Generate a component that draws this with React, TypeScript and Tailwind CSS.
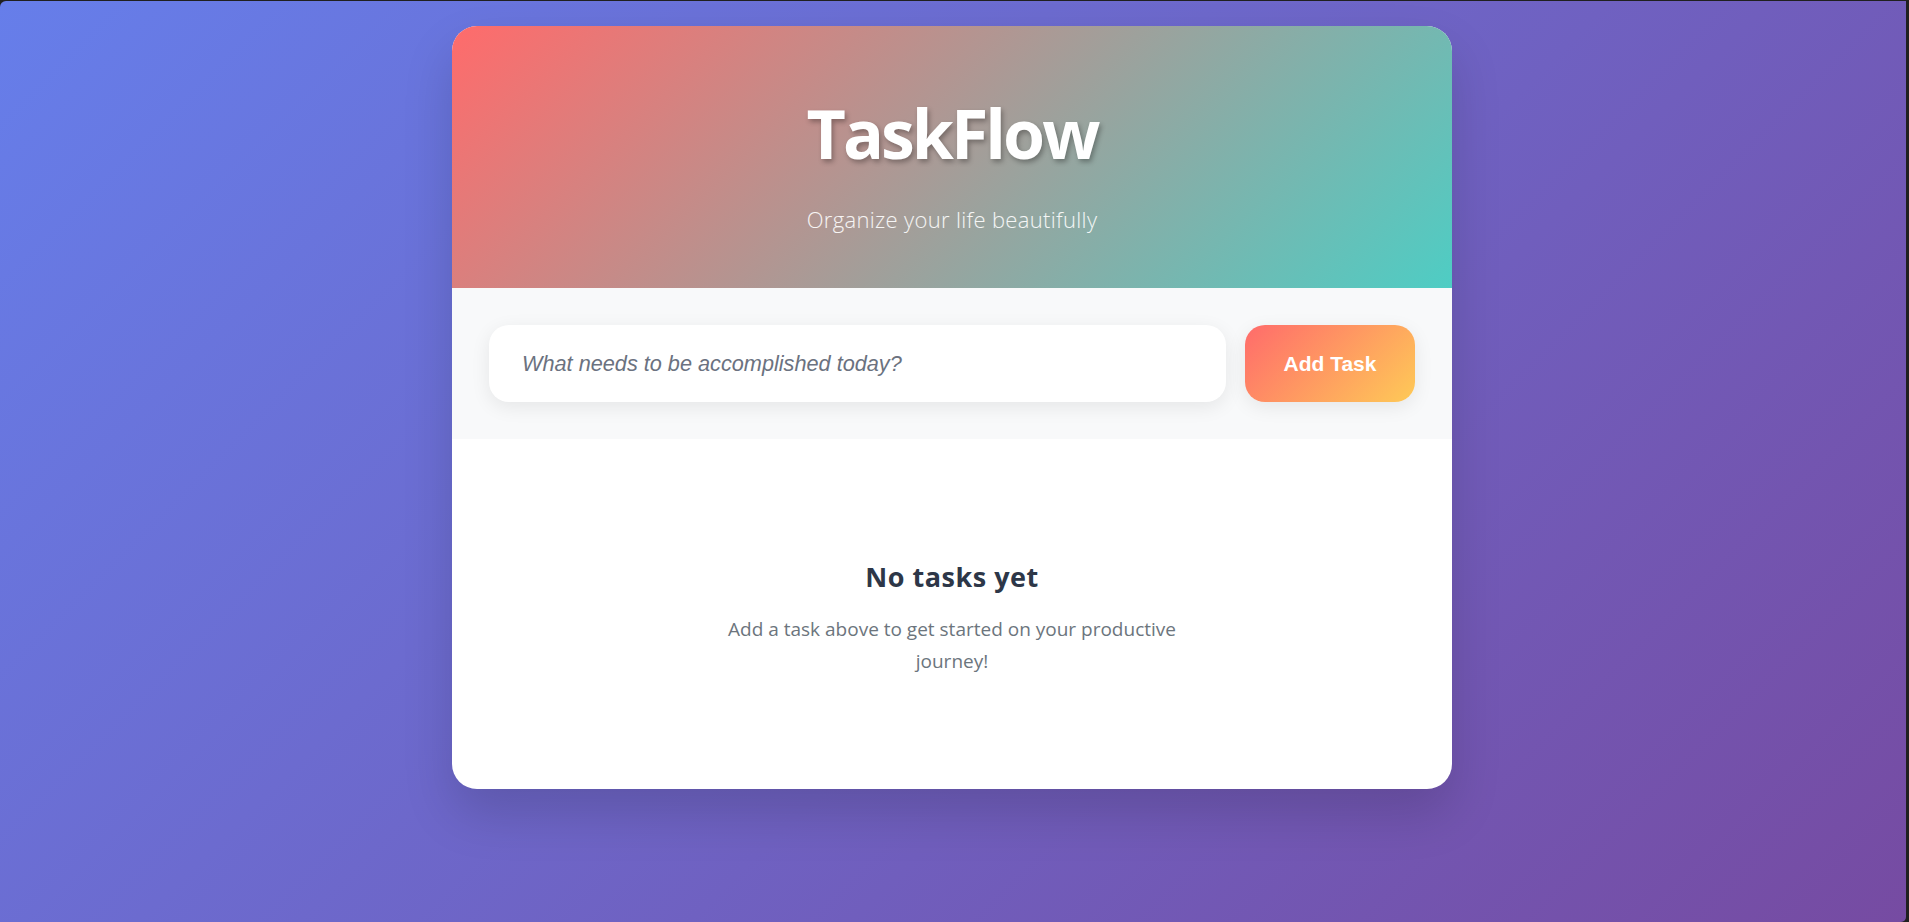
import React from "react";

export default function App() {
  return (
    <div className="w-full h-[922px] bg-[#202020] overflow-hidden">
      <div className="h-[921px] mt-[1px] mr-[3px] pr-[2px] rounded-tl-[6px] rounded-br-[5px] bg-[linear-gradient(135deg,#667eea_0%,#764ba2_100%)] pt-[25px] font-['Open_Sans','Noto_Sans',sans-serif]">
        <div className="w-[1000px] mx-auto bg-white rounded-[25px] overflow-hidden shadow-[0_25px_50px_rgba(0,0,0,0.15)]">
          <header className="bg-[linear-gradient(135deg,#ff6b6b_0%,#4ecdc4_100%)] pt-[65px] pb-[52px] flex flex-col items-center text-white">
            <h1 className="text-[68px] leading-[84px] font-bold tracking-[-3px] [text-shadow:2px_3px_5px_rgba(0,0,0,0.3)]">
              TaskFlow
            </h1>
            <p className="mt-[28px] text-[22px] leading-[33px] font-light tracking-[0.33px] text-white/90">
              Organize your life beautifully
            </p>
          </header>
          <div className="bg-[#f8f9fa] p-[37px] flex gap-[19px]">
            <input
              type="text"
              placeholder="What needs to be accomplished today?"
              className="flex-1 h-[77px] rounded-[20px] bg-white pl-[33px] pr-[31px] text-[21.7px] font-['Liberation_Sans',Arial,sans-serif] text-[#2d3748] placeholder:italic placeholder:text-[#6b7280] outline-none border-0 shadow-[0_5px_19px_rgba(0,0,0,0.08)]"
            />
            <button className="w-[170px] h-[77px] rounded-[20px] bg-[linear-gradient(135deg,#ff6b6b_0%,#feca57_100%)] text-white font-bold text-[21px] font-['Liberation_Sans',Arial,sans-serif] shadow-[0_5px_19px_rgba(0,0,0,0.08)]">
              Add Task
            </button>
          </div>
          <div className="pt-[122px] pb-[112px] flex flex-col items-center text-center">
            <h3 className="text-[27px] leading-[31px] font-bold tracking-[0.5px] text-[#2d3748]">
              No tasks yet
            </h3>
            <p className="mt-[21px] max-w-[500px] text-[19px] leading-[32px] text-[#6c757d]">
              Add a task above to get started on your productive journey!
            </p>
          </div>
        </div>
      </div>
    </div>
  );
}
